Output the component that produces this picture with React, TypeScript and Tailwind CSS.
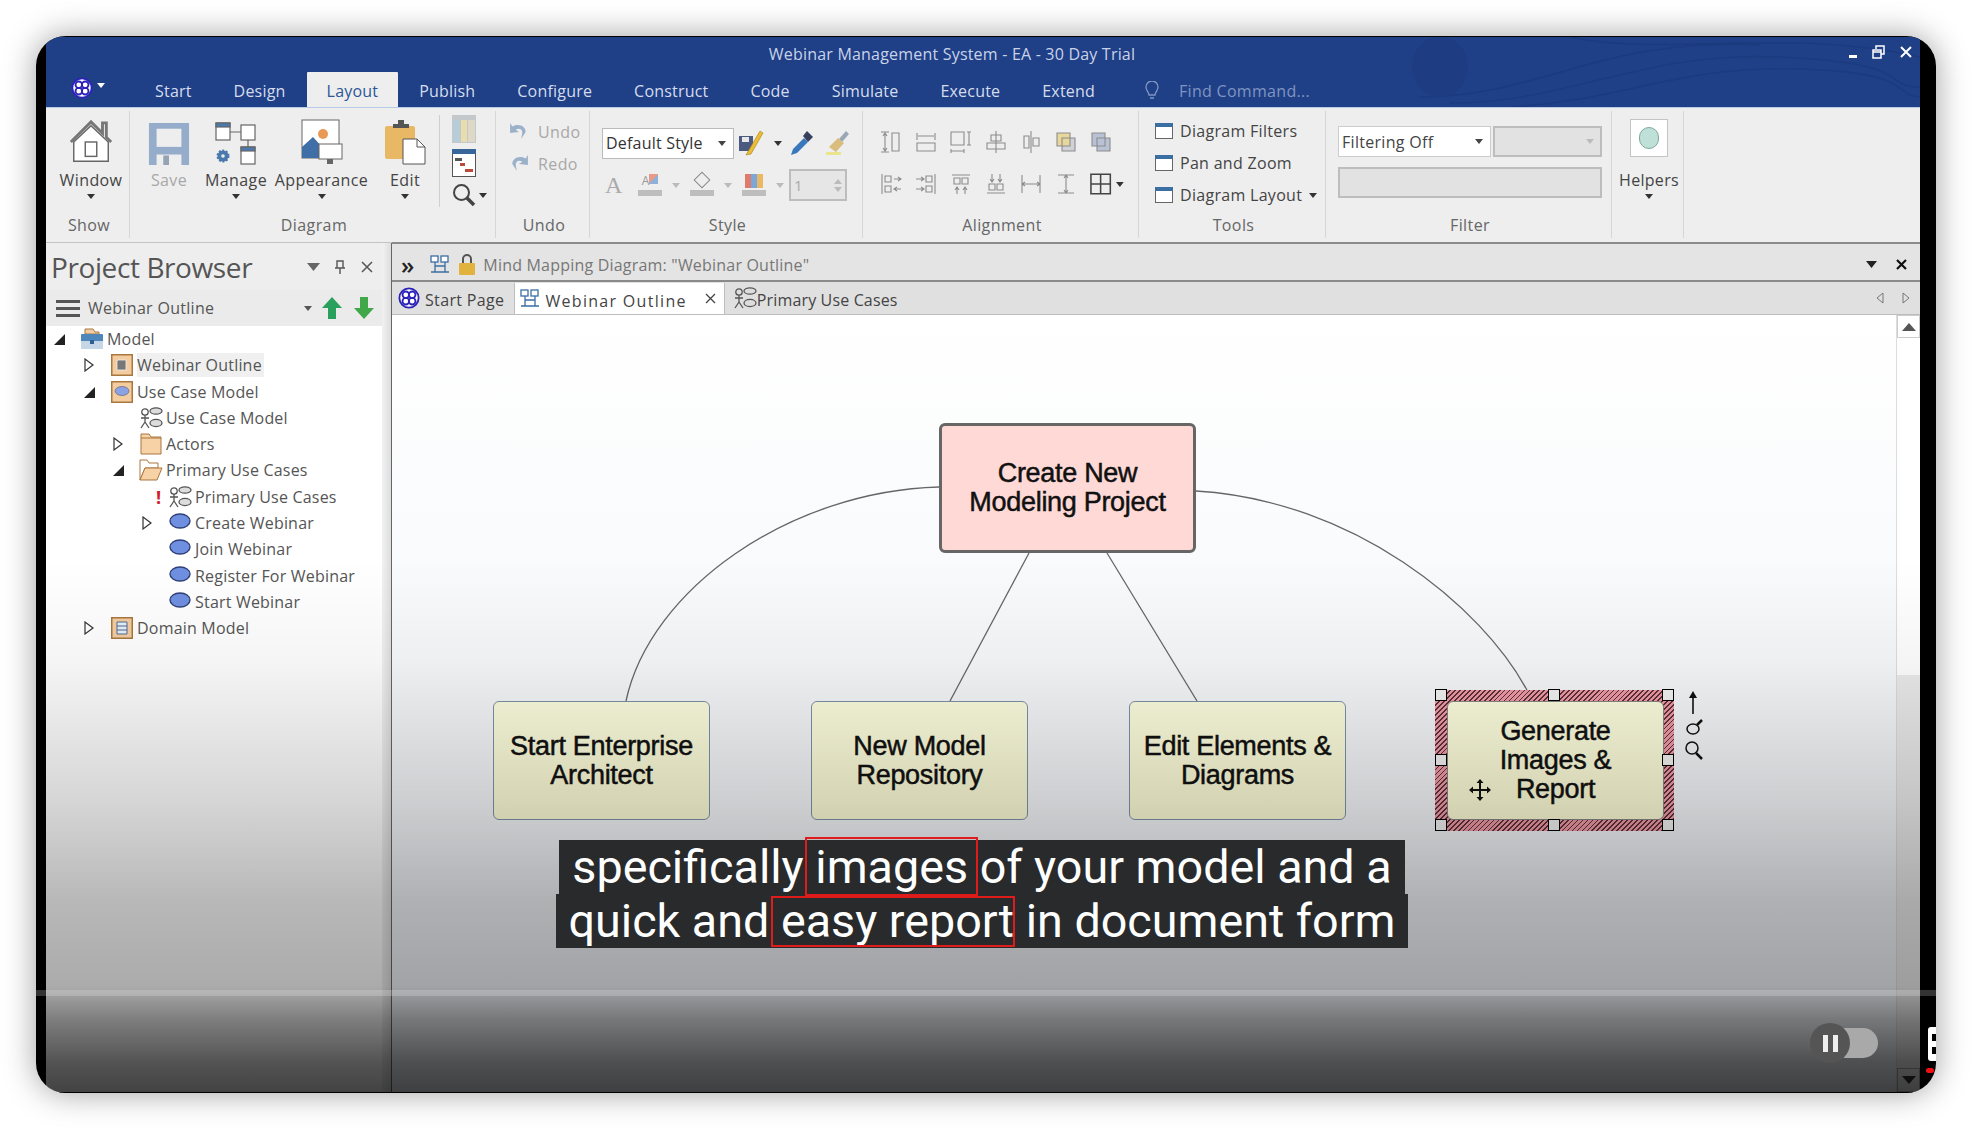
import React from "react";

const UI = "font-['Open_Sans','Noto_Sans',sans-serif]";

const Caret = ({ className = "", w = 8, h = 5 }: { className?: string; w?: number; h?: number }) => (
  <svg width={w} height={h} viewBox="0 0 8 5" preserveAspectRatio="none" className={className}>
    <path d="M0 0h8L4 5z" fill="currentColor" />
  </svg>
);

const Logo = ({ size = 24 }: { size?: number }) => (
  <svg width={size} height={size} viewBox="0 0 24 24" fill="none">
    <circle cx="12" cy="12" r="10.5" fill="#fff" stroke="#2c22b8" strokeWidth="2" />
    <circle cx="8.5" cy="8.5" r="3.6" stroke="#2c22b8" strokeWidth="2" />
    <circle cx="15.5" cy="8.5" r="3.6" stroke="#2c22b8" strokeWidth="2" />
    <circle cx="8.5" cy="15.5" r="3.6" stroke="#2c22b8" strokeWidth="2" />
    <circle cx="15.5" cy="15.5" r="3.6" stroke="#2c22b8" strokeWidth="2" />
  </svg>
);

const HomeIcon = () => (
  <svg width="46" height="46" viewBox="0 0 48 48" fill="none">
    <path d="M3 24 24 3l12 12V4h4v15l5 5" stroke="#777" strokeWidth="3" />
    <path d="M6 24v20h36V24L24 7z" fill="#fff" stroke="#666" strokeWidth="1.5" />
    <rect x="18" y="24" width="12" height="15" fill="#fff" stroke="#666" strokeWidth="1.5" />
  </svg>
);

const SaveIcon = () => (
  <svg width="42" height="42" viewBox="0 0 42 44">
    <path d="M0 0h42v44H0z" fill="#95adcb" />
    <rect x="8" y="6" width="26" height="19" fill="#eee" />
    <rect x="8" y="33" width="26" height="11" fill="#eee" />
    <rect x="15" y="34" width="6" height="10" fill="#95a3b5" />
  </svg>
);

const ManageIcon = () => (
  <svg width="42" height="44" viewBox="0 0 42 44" fill="none" stroke="#666" strokeWidth="1.2">
    <rect x="1" y="2" width="14" height="17" fill="#fff" />
    <rect x="1" y="2" width="14" height="4" fill="#4a79ad" />
    <rect x="26" y="4" width="14" height="15" fill="#fff" />
    <path d="M15 11h11M33 19v7" />
    <rect x="26" y="26" width="14" height="17" fill="#fff" />
    <rect x="26" y="26" width="14" height="4" fill="#4a79ad" />
    <circle cx="8" cy="35" r="5.5" fill="#4a79ad" stroke="#4a79ad" strokeDasharray="2 1.5" strokeWidth="2" />
    <circle cx="8" cy="35" r="1.8" fill="#eee" stroke="none" />
  </svg>
);

const AppearanceIcon = () => (
  <svg width="42" height="46" viewBox="0 0 42 46" fill="none">
    <rect x="1" y="1" width="37" height="38" fill="#fff" stroke="#666" />
    <circle cx="22" cy="15" r="5" fill="#e89a55" />
    <path d="M1 39V28l11-10 11 12v9z" fill="#3f6fa6" />
    <rect x="18" y="25" width="23" height="15" fill="#fff" stroke="#666" />
    <rect x="26" y="40" width="6" height="5" fill="#666" />
  </svg>
);

const EditIcon = () => (
  <svg width="42" height="46" viewBox="0 0 42 46" fill="none">
    <rect x="1" y="7" width="30" height="33" rx="2" fill="#e8b865" />
    <path d="M9 9V5h5V1h6v4h5v4z" fill="#555" />
    <path d="M19 20h14l8 8v17H19z" fill="#fff" stroke="#555" />
    <path d="M33 20v8h8" stroke="#555" />
  </svg>
);

const ColumnsIcon = () => (
  <svg width="24" height="28" viewBox="0 0 24 28">
    <rect width="24" height="28" fill="#c2c8cc" />
    <rect x="1" y="5" width="7" height="22" fill="#b7cdd8" />
    <rect x="9" y="5" width="6" height="22" fill="#e9dcae" />
    <rect x="16" y="5" width="7" height="22" fill="#ddd9c6" />
  </svg>
);

const GanttIcon = () => (
  <svg width="24" height="28" viewBox="0 0 24 28">
    <rect x=".5" y=".5" width="23" height="27" fill="#fff" stroke="#555" />
    <rect width="24" height="5" fill="#38659a" />
    <rect x="3" y="9" width="7" height="3" fill="#555" />
    <rect x="8" y="14" width="5" height="3" fill="#bb4a3c" />
    <rect x="13" y="20" width="8" height="3" fill="#bb4a3c" />
  </svg>
);

const SearchIcon = ({ size = 24 }: { size?: number }) => (
  <svg width={size} height={size} viewBox="0 0 24 24" fill="none" stroke="#444">
    <circle cx="9.5" cy="9.5" r="7.5" strokeWidth="2" />
    <path d="m15 15 7 7" strokeWidth="3.5" />
  </svg>
);

const Arrow = ({ flip }: { flip?: boolean }) => (
  <svg width="20" height="20" viewBox="0 0 18 18" className={flip ? "-scale-x-100" : ""}>
    <path d="M3 9C3 4 9 1 15 4l2-3v9l-8-1 3-2C9 5 6 6 6 10l1 5z" fill="#9bb0c9" />
  </svg>
);

const BrushSave = () => (
  <svg width="26" height="26" viewBox="0 0 26 26">
    <rect x="1" y="6" width="14" height="15" fill="#4a5a80" />
    <rect x="4" y="7" width="7" height="5" fill="#e8e8e8" />
    <path d="M8 25 22 1l3 2-12 21z" fill="#e9bd35" stroke="#a97f13" strokeWidth=".6" />
  </svg>
);

const Dropper = () => (
  <svg width="24" height="26" viewBox="0 0 24 26">
    <path d="m1 25 2-6L14 8l4 4L7 23z" fill="#3a78bd" />
    <path d="m13 6 4-5 6 6-5 5z" fill="#37405a" />
  </svg>
);

const Broom = () => (
  <svg width="24" height="26" viewBox="0 0 24 26">
    <path d="m13 9 7-8 3 3-7 8z" fill="#9aa7b5" />
    <path d="m3 17 9-9 6 5-8 9z" fill="#d9bd7c" />
    <rect x="0" y="22" width="15" height="3" fill="#e8e58c" />
  </svg>
);

// alignment group, drawn on a 24 box
const alignIcons: React.ReactNode[] = [
  <path key="a" d="M2 2h8M2 22h8M6 3v18M4 6l2-3 2 3M4 18l2 3 2-3M13 3h7v18h-7z" />,
  <path key="b" d="M3 3v7M21 3v7M4 6h16M3 13h18v8H3z" />,
  <path key="c" d="M2 2h13v13H2zM20 2v13M18 2h4M18 15h4M2 19v4M15 19v4M2 21h13" />,
  <path key="d" d="M12 1v22M7 5h10v6H7zM3 13h18v6H3z" />,
  <path key="e" d="M12 1v22M5 6h5v12H5zM14 8h6v8h-6zM12 4v16" />,
  <path key="f" d="M3 3h13v13H3zM8 8h13v13H8z" />,
  <path key="g" d="M3 3h13v13H3zM8 8h13v13H8z" />,
  <path key="h" d="M3 2v20M6 4h6v6H6zM6 14h6v6H6zM15 7h7M15 17h7M19 5l3 2-3 2M18 15l-3 2 3 2" />,
  <path key="i" d="M21 2v20M12 4h6v6h-6zM12 14h6v6h-6zM2 7h8M2 17h8M7 5l3 2-3 2M7 15l3 2-3 2" />,
  <path key="j" d="M3 3h18M5 6h6v6H5zM13 6h6v6h-6zM8 15v7M16 15v7M6 18l2-3 2 3M14 18l2-3 2 3" />,
  <path key="k" d="M3 21h18M5 12h6v6H5zM13 12h6v6h-6zM8 2v8M16 2v8M6 7l2 3 2-3M14 7l2 3 2-3" />,
  <path key="l" d="M3 3v18M21 3v18M3 12h18M6 10l-3 2 3 2M18 10l3 2-3 2" />,
  <path key="m" d="M4 3h16M4 21h16M12 3v18M10 6l2-3 2 3M10 18l2 3 2-3" />,
];

const AlignIcon = ({ n }: { n: number }) => (
  <svg width="24" height="24" viewBox="0 0 24 24" fill="none" stroke="#8c8c8c" strokeWidth="1.1">
    {n === 5 && <rect x="8" y="8" width="13" height="13" fill="#cfd3d8" stroke="none" />}
    {n === 5 && <rect x="3" y="3" width="13" height="13" fill="#e8d79c" stroke="none" />}
    {n === 6 && <rect x="3" y="3" width="13" height="13" fill="#b8c2d4" stroke="none" />}
    {n === 6 && <rect x="8" y="8" width="13" height="13" fill="#b8c2d4" stroke="none" />}
    {alignIcons[n]}
  </svg>
);

const WinIcon = () => (
  <svg width="18" height="16" viewBox="0 0 18 16" fill="none">
    <rect x=".5" y=".5" width="17" height="15" fill="#fff" stroke="#666" />
    <rect x="0" y="0" width="18" height="4" fill="#3d6ea3" />
  </svg>
);

const DiagramGlyph = ({ color = "#555" }: { color?: string }) => (
  <svg width="24" height="22" viewBox="0 0 24 22" fill="none" stroke={color} strokeWidth="1.3">
    <circle cx="6" cy="5" r="3.2" />
    <path d="M6 8v7M2 11h8M6 15l-4 6M6 15l4 6" />
    <ellipse cx="17" cy="4" rx="6" ry="3.2" fill="#ddd" />
    <ellipse cx="17" cy="16" rx="6" ry="3.6" fill="#ddd" />
  </svg>
);

const MindGlyph = () => (
  <svg width="20" height="20" viewBox="0 0 20 20" fill="#fff" stroke="#3d6ea3" strokeWidth="1.3">
    <rect x="1" y="1" width="7" height="6" />
    <rect x="11" y="1" width="7" height="6" />
    <path d="M5 7v4h10V7M1 17h18M5 11v6M15 11v6" fill="none" />
  </svg>
);

const Expander = ({ open }: { open?: boolean }) => (
  <svg width="13" height="14" viewBox="0 0 13 14">
    {open ? (
      <path d="M1 13 12 2v11z" fill="#222" />
    ) : (
      <path d="M2 1v12l8-6z" fill="#fff" stroke="#333" strokeWidth="1.2" />
    )}
  </svg>
);

type Kind = "model" | "box-note" | "box-case" | "box-list" | "diagram" | "folder" | "open" | "case";

const TreeIcon = ({ kind }: { kind: Kind }) => {
  if (kind === "model")
    return (
      <svg width="22" height="22" viewBox="0 0 22 22">
        <path d="M4 6V1h8l2 3h4v2z" fill="#f0cda3" stroke="#a9773f" />
        <rect y="6" width="22" height="15" rx="1" fill="#4c86bb" />
        <rect y="13" width="22" height="8" fill="#c5d6e6" />
        <rect x="9" y="12" width="4" height="4" fill="#2e5f93" />
      </svg>
    );
  if (kind === "folder")
    return (
      <svg width="22" height="22" viewBox="0 0 22 22">
        <path d="M1 21V1h8l2 3h10v17z" fill="#f6d2a6" stroke="#a9773f" />
        <path d="M1 5h20" stroke="#a9773f" />
      </svg>
    );
  if (kind === "open")
    return (
      <svg width="24" height="22" viewBox="0 0 24 22">
        <path d="M1 21V1h7l2 3h9v5H6z" fill="#fff" stroke="#a9773f" />
        <path d="M1 21 6 9h17l-5 12z" fill="#f6d2a6" stroke="#a9773f" />
      </svg>
    );
  if (kind === "case")
    return (
      <svg width="22" height="16" viewBox="0 0 22 16" className="mb-[4px]">
        <ellipse cx="11" cy="8" rx="10" ry="7" fill="#6f8fe0" stroke="#2f3f77" strokeWidth="1.4" />
      </svg>
    );
  if (kind === "diagram") return <DiagramGlyph />;
  return (
    <svg width="22" height="22" viewBox="0 0 22 22">
      <rect x=".75" y=".75" width="20.5" height="20.5" fill="#f3cda0" stroke="#a9773f" strokeWidth="1.5" />
      {kind === "box-note" && <path d="M7 6h8v10H6V7z" fill="#777" stroke="#eee" strokeWidth=".8" />}
      {kind === "box-case" && <ellipse cx="11" cy="10" rx="7" ry="4.5" fill="#8ba3e4" stroke="#667" strokeWidth=".7" />}
      {kind === "box-list" && <path d="M6 5h10v12H6zM6 9h10M6 13h10" fill="#e6eef6" stroke="#4c6a93" />}
    </svg>
  );
};

type TreeRow = { label: string; level: number; kind: Kind; expander?: "open" | "closed"; mark?: boolean; selected?: boolean };

const tree: TreeRow[] = [
  { label: "Model", level: 0, kind: "model", expander: "open" },
  { label: "Webinar Outline", level: 1, kind: "box-note", expander: "closed", selected: true },
  { label: "Use Case Model", level: 1, kind: "box-case", expander: "open" },
  { label: "Use Case Model", level: 2, kind: "diagram" },
  { label: "Actors", level: 2, kind: "folder", expander: "closed" },
  { label: "Primary Use Cases", level: 2, kind: "open", expander: "open" },
  { label: "Primary Use Cases", level: 3, kind: "diagram", mark: true },
  { label: "Create Webinar", level: 3, kind: "case", expander: "closed" },
  { label: "Join Webinar", level: 3, kind: "case" },
  { label: "Register For Webinar", level: 3, kind: "case" },
  { label: "Start Webinar", level: 3, kind: "case" },
  { label: "Domain Model", level: 1, kind: "box-list", expander: "closed" },
];

const indents = ["pl-[7px]", "pl-[37px]", "pl-[66px]", "pl-[95px]"];

const tabs = ["Start", "Design", "Layout", "Publish", "Configure", "Construct", "Code", "Simulate", "Execute", "Extend"];

const BigButton = ({ icon, label, width, muted }: { icon: React.ReactNode; label: string; width: string; muted?: boolean }) => (
  <div className={`flex flex-col items-center ${width}`}>
    <div className="flex h-[47px] items-end">{icon}</div>
    <div className={`mt-[4px] whitespace-nowrap text-[16px] leading-[22px] tracking-[0.4px] ${muted ? "text-[#a8a8a8]" : "text-[#444]"}`}>{label}</div>
    {!muted && <Caret className="mt-[3px] text-[#333]" />}
  </div>
);

const Group = ({ label, width, children, className = "" }: { label: string; width: string; children: React.ReactNode; className?: string }) => (
  <div className={`flex h-full shrink-0 flex-col border-r border-[#d6d6d6] ${width}`}>
    <div className={`h-[103px] ${className}`}>{children}</div>
    <div className="flex h-[22px] items-center justify-center pl-[3px] text-[16px] tracking-[0.4px] text-[#666]">{label}</div>
  </div>
);

const DiagramNode = ({ lines, className }: { lines: string[]; className: string }) => (
  <div
    className={`absolute flex flex-col items-center justify-center rounded-[6px] font-['Liberation_Sans',Arial,sans-serif] text-[27px] leading-[29px] tracking-[-0.3px] text-[#111] [-webkit-text-stroke:0.5px_#111] ${className}`}
  >
    {lines.map((l) => (
      <div key={l}>{l}</div>
    ))}
  </div>
);

const Handle = ({ className }: { className: string }) => (
  <div className={`absolute h-[12px] w-[12px] border border-black bg-[#f4f4f4] ${className}`} />
);

export default function App() {
  return (
    <div className={`h-[1130px] w-[1972px] overflow-hidden bg-white pl-[36px] pt-[36px] ${UI}`}>
      <div className="relative flex h-[1057px] w-[1900px] flex-col overflow-hidden rounded-[30px] bg-black pb-[1px] pl-[10px] pr-[16px] pt-[1px] shadow-[0_0_32px_rgba(0,0,0,0.38)]">
        {/* title bar + tabs */}
        <div className="relative h-[70px] shrink-0 overflow-hidden bg-[#1f3f87]">
          <svg className="absolute right-0 top-0" width="560" height="70" viewBox="0 0 560 70" fill="none" stroke="#1c3a7e" strokeWidth="1.5">
            <path d="M60 60C180 60 240 0 400 8" />
            <path d="M90 66C210 66 280 14 420 20s100 30 140 30" />
            <path d="M150 70C260 64 320 28 440 32s90 26 120 28" />
            <path d="M210 0c90 20 220-10 350 20" />
            <ellipse cx="80" cy="30" rx="28" ry="30" fill="#1d3c82" stroke="none" />
          </svg>
          <div className="relative flex h-[34px] items-center justify-center pr-[62px] text-[16px] tracking-[0.2px] text-[#c9d3e8]">
            Webinar Management System - EA - 30 Day Trial
          </div>
          <div className="absolute right-[8px] top-[8px] flex items-center gap-[15px] text-white">
            <div className="mt-[8px] h-[3px] w-[8px] bg-white" />
            <svg width="13" height="14" viewBox="0 0 13 14" fill="none" stroke="#fff" strokeWidth="1.5">
              <path d="M4 4V1h8v8H9M1 5h8v8H1zM1 7h8" />
            </svg>
            <svg width="12" height="12" viewBox="0 0 12 12" stroke="#fff" strokeWidth="2">
              <path d="m1 1 10 10M11 1 1 11" />
            </svg>
          </div>
          <div className="absolute bottom-0 left-0 flex h-[37px] items-end">
            <div className="mb-[8px] ml-[25px] flex w-[63px] items-center gap-[4px] text-white">
              <Logo size={22} />
              <Caret className="mb-[6px]" />
            </div>
            {tabs.map((t) => (
              <div
                key={t}
                className={
                  t === "Layout"
                    ? "flex h-[35px] items-center rounded-t-[1px] bg-[#eee] px-[20px] pt-[2px] text-[16px] tracking-[0.2px] text-[#2b5797]"
                    : "flex h-[35px] items-center px-[21px] pt-[2px] text-[16px] tracking-[0.2px] text-[#d5dded]"
                }
              >
                {t}
              </div>
            ))}
            <div className="ml-[29px] flex h-[35px] items-center gap-[20px] pt-[2px] text-[16px] tracking-[0.3px] text-[#8095c0]">
              <svg width="14" height="20" viewBox="0 0 14 20" fill="none" stroke="#8095c0" strokeWidth="1.3">
                <path d="M4 14c0-3-3-4-3-8a6 6 0 0 1 12 0c0 4-3 5-3 8zM5 17h4" />
              </svg>
              Find Command...
            </div>
          </div>
        </div>

        {/* ribbon */}
        <div className="flex h-[135px] shrink-0 border-t border-[#b8cbe6] bg-[#eeeeee] pb-[4px] pt-[3px]">
          <Group label="Show" width="w-[84px]" className="pl-[5px] pt-[7px]">
            <BigButton icon={<HomeIcon />} label="Window" width="w-[80px]" />
          </Group>
          <Group label="Diagram" width="w-[366px]" className="flex pl-[11px] pt-[7px]">
            <BigButton icon={<SaveIcon />} label="Save" width="w-[56px]" muted />
            <BigButton icon={<ManageIcon />} label="Manage" width="w-[78px]" />
            <BigButton icon={<AppearanceIcon />} label="Appearance" width="w-[93px]" />
            <BigButton icon={<EditIcon />} label="Edit" width="w-[74px]" />
            <div className="-ml-[3px] -mt-[3px] flex h-[92px] flex-col items-start justify-between border-l border-[#cfcfcf] pl-[12px]">
              <ColumnsIcon />
              <GanttIcon />
              <div className="flex items-center gap-[3px] text-[#333]">
                <SearchIcon />
                <Caret />
              </div>
            </div>
          </Group>
          <Group label="Undo" width="w-[94px]" className="flex flex-col gap-[13px] pl-[13px] pt-[11px] text-[16px] tracking-[0.4px] text-[#a8a8a8]">
            <div className="flex h-[19px] items-center gap-[9px]">
              <Arrow flip />
              Undo
            </div>
            <div className="flex h-[19px] items-center gap-[9px]">
              <Arrow />
              Redo
            </div>
          </Group>
          <Group label="Style" width="w-[273px]" className="pl-[12px] pt-[16px]">
            <div className="flex h-[32px] items-center">
              <div className="flex h-[31px] w-[132px] items-center justify-between border border-[#bbb] bg-white pl-[3px] pr-[7px] text-[16px] tracking-[0.2px] text-[#333]">
                Default Style
                <Caret className="text-[#444]" />
              </div>
              <div className="ml-[4px]">
                <BrushSave />
              </div>
              <Caret className="ml-[10px] text-[#333]" />
              <div className="ml-[8px]">
                <Dropper />
              </div>
              <div className="ml-[12px]">
                <Broom />
              </div>
            </div>
            <div className="mt-[10px] flex h-[32px] items-center">
              <div className="w-[26px] pl-[3px] font-['Liberation_Serif',serif] text-[24px] leading-none text-[#aaa]">A</div>
              <div className="ml-[10px] flex w-[24px] flex-col items-center text-[12px] leading-[14px] text-[#999]">
                <div className="flex items-start">
                  <span>A</span>
                  <div className="h-[10px] w-[9px] bg-[linear-gradient(135deg,#e89a85_50%,#8fb0d8_50%)]" />
                </div>
                <div className="mt-[2px] h-[6px] w-[24px] bg-[#bdbdbd]" />
              </div>
              <Caret className="ml-[10px] text-[#bbb]" />
              <div className="ml-[10px] flex w-[24px] flex-col items-center">
                <div className="h-[12px] w-[12px] rotate-45 border border-[#888]" />
                <div className="mt-[4px] h-[6px] w-[24px] bg-[#bdbdbd]" />
              </div>
              <Caret className="ml-[10px] text-[#bbb]" />
              <div className="ml-[10px] flex w-[24px] flex-col items-center">
                <div className="h-[14px] w-[18px] bg-[linear-gradient(90deg,#e07a6a_33%,#7aa6d8_33%,#7aa6d8_66%,#e8b865_66%)]" />
                <div className="mt-[2px] h-[6px] w-[24px] bg-[#bdbdbd]" />
              </div>
              <Caret className="ml-[10px] text-[#bbb]" />
              <div className="ml-[5px] flex h-[32px] w-[58px] items-center justify-between border-2 border-[#bdbdbd] bg-[#e6e6e6] px-[3px] text-[15px] text-[#aaa]">
                1
                <div className="flex flex-col gap-[3px]">
                  <Caret className="rotate-180 text-[#bbb]" />
                  <Caret className="text-[#bbb]" />
                </div>
              </div>
            </div>
          </Group>
          <Group label="Alignment" width="w-[276px]" className="pl-[16px] pt-[19px]">
            <div className="grid w-[245px] grid-cols-[repeat(7,35px)] gap-y-[18px]">
              {[0, 1, 2, 3, 4, 5, 6, 7, 8, 9, 10, 11, 12].map((n) => (
                <AlignIcon key={n} n={n} />
              ))}
              <div className="flex items-center gap-[4px] text-[#333]">
                <svg width="24" height="24" viewBox="0 0 24 24" fill="none" stroke="#444" strokeWidth="1.6">
                  <path d="M2 2h20v20H2zM12 2v20M2 12h20" />
                </svg>
                <Caret />
              </div>
            </div>
          </Group>
          <Group label="Tools" width="w-[187px]" className="flex flex-col gap-[14px] pl-[16px] pt-[11px] text-[16px] tracking-[0.3px] text-[#444]">
            <div className="flex h-[18px] items-center gap-[7px]">
              <WinIcon />
              Diagram Filters
            </div>
            <div className="flex h-[18px] items-center gap-[7px]">
              <WinIcon />
              Pan and Zoom
            </div>
            <div className="flex h-[18px] items-center gap-[7px]">
              <WinIcon />
              Diagram Layout
              <Caret className="text-[#333]" />
            </div>
          </Group>
          <Group label="Filter" width="w-[286px]" className="pl-[12px] pt-[15px]">
            <div className="flex h-[31px] gap-[2px]">
              <div className="flex w-[153px] items-center justify-between border border-[#ccc] bg-white pl-[3px] pr-[7px] text-[16px] tracking-[0.3px] text-[#444]">
                Filtering Off
                <Caret className="text-[#444]" />
              </div>
              <div className="flex w-[109px] items-center justify-end border-2 border-[#bdbdbd] bg-[#e2e2e2] pr-[6px]">
                <Caret className="text-[#bbb]" />
              </div>
            </div>
            <div className="mt-[10px] h-[31px] w-[264px] border-2 border-[#bdbdbd] bg-[#e2e2e2]" />
          </Group>
          <Group label="" width="w-[72px]" className="flex flex-col items-center pl-[3px] pt-[8px]">
            <div className="flex h-[38px] w-[38px] items-center justify-center border border-[#c4c4c4] bg-white">
              <div className="h-[22px] w-[20px] rounded-full border border-[#7fa8a0] bg-[#bfe0d6]" />
            </div>
            <div className="mt-[12px] text-[16px] leading-[22px] tracking-[0.3px] text-[#444]">Helpers</div>
            <Caret className="mt-[3px] text-[#333]" />
          </Group>
        </div>

        {/* panels */}
        <div className="flex min-h-0 flex-1">
          {/* project browser */}
          <div className="flex w-[346px] shrink-0 border-t border-[#c4c4c4]">
            <div className="flex w-[336px] flex-col bg-white">
              <div className="flex h-[47px] shrink-0 items-center bg-[#eeeeee] pl-[5px] pr-[9px] text-[#555]">
                <span className="flex-1 text-[28px] leading-none tracking-[-0.4px]">Project Browser</span>
                <Caret className="text-[#666]" w={13} h={8} />
                <svg className="ml-[14px]" width="12" height="14" viewBox="0 0 12 14" fill="none" stroke="#555" strokeWidth="1.4">
                  <path d="M3 1h6v7H3zM1 8h10M6 8v6" />
                </svg>
                <svg className="ml-[15px]" width="12" height="12" viewBox="0 0 12 12" stroke="#555" strokeWidth="1.5">
                  <path d="m1 1 10 10M11 1 1 11" />
                </svg>
              </div>
              <div className="flex h-[36px] shrink-0 items-center bg-[#ebebeb] pl-[10px] pr-[8px] text-[16px] tracking-[0.3px] text-[#555]">
                <div className="flex w-[24px] flex-col gap-[4px]">
                  <div className="h-[3px] bg-[#555]" />
                  <div className="h-[3px] bg-[#555]" />
                  <div className="h-[3px] bg-[#555]" />
                </div>
                <span className="ml-[8px] flex-1">Webinar Outline</span>
                <Caret className="text-[#555]" />
                <svg className="ml-[10px]" width="20" height="22" viewBox="0 0 20 22">
                  <path d="M10 0 20 11h-6v11H6V11H0z" fill="#2aa05d" />
                </svg>
                <svg className="ml-[12px]" width="20" height="22" viewBox="0 0 20 22">
                  <path d="M10 22 20 11h-6V0H6v11H0z" fill="#41a84a" />
                </svg>
              </div>
              <div className="min-h-0 flex-1">
                {tree.map((r, i) => (
                  <div key={i} className={`flex h-[26.27px] items-center ${indents[r.level]}`}>
                    <div className="relative flex w-[24px] shrink-0 items-center">
                      {r.expander && <Expander open={r.expander === "open"} />}
                      {r.mark && <span className="absolute left-[15px] text-[18px] font-bold leading-none text-[#d0202a]">!</span>}
                    </div>
                    <div className="flex w-[30px] shrink-0 justify-center">
                      <TreeIcon kind={r.kind} />
                    </div>
                    <span className={`whitespace-nowrap text-[16px] leading-[24px] tracking-[0.2px] text-[#555] ${r.selected ? "bg-[#f0f0f0] pr-[2px]" : ""}`}>{r.label}</span>
                  </div>
                ))}
              </div>
            </div>
            <div className="w-[10px] shrink-0 border-r border-[#666] bg-[linear-gradient(90deg,#f2f2f2,#ddd)]" />
          </div>

          {/* diagram side */}
          <div className="flex min-w-0 flex-1 flex-col">
            <div className="flex h-[40px] shrink-0 items-center border-y-2 border-[#8a8a8a] bg-[#e4e4e4] pl-[9px] pr-[13px] pt-[5px] text-[16px] text-[#777]">
              <span className="text-[24px] font-semibold leading-none text-[#222]">»</span>
              <div className="ml-[16px]">
                <MindGlyph />
              </div>
              <svg className="ml-[9px]" width="16" height="22" viewBox="0 0 16 22">
                <path d="M4 9V5a4 4 0 0 1 8 0v4" fill="none" stroke="#555" strokeWidth="2" />
                <rect y="9" width="16" height="12" rx="1" fill="#e2b23f" />
              </svg>
              <span className="ml-[8px] flex-1 tracking-[0.2px]">Mind Mapping Diagram: "Webinar Outline"</span>
              <Caret className="mr-[4px] text-[#222]" w={11} h={7} />
              <svg className="ml-[15px]" width="11" height="11" viewBox="0 0 11 11" stroke="#111" strokeWidth="2.2">
                <path d="m1 1 9 9M10 1l-9 9" />
              </svg>
            </div>
            <div className="flex h-[33px] shrink-0 items-end border-b border-[#bdbdbd] bg-[#e0e0e0] pl-[5px] pr-[10px] text-[16px] text-[#444]">
              <div className="flex h-[32px] items-center gap-[5px] pl-[1px] pr-[10px] tracking-[0.35px]">
                <Logo size={22} />
                <span className="pt-[4px]">Start Page</span>
              </div>
              <div className="flex h-[31px] items-center border-l border-r border-[#bdbdbd] bg-white pl-[5px] pr-[8px]">
                <MindGlyph />
                <span className="ml-[5px] pt-[4px] tracking-[1.3px]">Webinar Outline</span>
                <svg className="ml-[18px]" width="11" height="11" viewBox="0 0 11 11" stroke="#444" strokeWidth="1.3">
                  <path d="m1 1 9 9M10 1l-9 9" />
                </svg>
              </div>
              <div className="flex h-[32px] flex-1 items-center pl-[8px]">
                <DiagramGlyph />
                <span className="flex-1 pt-[4px] tracking-[0.15px]">Primary Use Cases</span>
                <svg width="8" height="12" viewBox="0 0 8 12" fill="none" stroke="#777">
                  <path d="M7 1v10L1 6z" />
                </svg>
                <svg className="ml-[18px]" width="8" height="12" viewBox="0 0 8 12" fill="none" stroke="#777">
                  <path d="M1 1v10l6-5z" />
                </svg>
              </div>
            </div>
            <div className="flex min-h-0 flex-1">
              <div className="relative min-w-0 flex-1 bg-[linear-gradient(180deg,#fff,#eef1f6)]">
                <svg className="absolute left-0 top-0" width="1504" height="560" fill="none" stroke="#666" strokeWidth="1.3">
                  <path d="M547 172C398 176 258 274 234 386" />
                  <path d="M637 238 558 386" />
                  <path d="M715 238 805 386" />
                  <path d="M804 176C960 185 1090 290 1136 377" />
                </svg>
                <DiagramNode
                  lines={["Create New", "Modeling Project"]}
                  className="left-[547px] top-[108px] h-[130px] w-[257px] border-[3px] border-[#666] bg-[#ffd9d6]"
                />
                <DiagramNode
                  lines={["Start Enterprise", "Architect"]}
                  className="left-[101px] top-[386px] h-[119px] w-[217px] border border-[#7d93a8] bg-[linear-gradient(180deg,#ffffe0,#ffffd8)]"
                />
                <DiagramNode
                  lines={["New Model", "Repository"]}
                  className="left-[419px] top-[386px] h-[119px] w-[217px] border border-[#7d93a8] bg-[linear-gradient(180deg,#ffffe0,#ffffd8)]"
                />
                <DiagramNode
                  lines={["Edit Elements &", "Diagrams"]}
                  className="left-[737px] top-[386px] h-[119px] w-[217px] border border-[#7d93a8] bg-[linear-gradient(180deg,#ffffe0,#ffffd8)]"
                />
                <div className="absolute left-[1043px] top-[375px] h-[141px] w-[239px] bg-[repeating-linear-gradient(135deg,#5c3038_0,#5c3038_1.2px,#f09aa6_1.2px,#f09aa6_3.5px)]" />
                <DiagramNode
                  lines={["Generate", "Images &", "Report"]}
                  className="left-[1055px] top-[386px] h-[119px] w-[217px] border border-[#888] bg-[linear-gradient(180deg,#ffffe0,#ffffd8)]"
                />
                <Handle className="left-[1043px] top-[374px]" />
                <Handle className="left-[1156px] top-[374px]" />
                <Handle className="left-[1270px] top-[374px]" />
                <Handle className="left-[1043px] top-[439px]" />
                <Handle className="left-[1270px] top-[439px]" />
                <Handle className="left-[1043px] top-[504px]" />
                <Handle className="left-[1156px] top-[504px]" />
                <Handle className="left-[1270px] top-[504px]" />
                <svg className="absolute left-[1076px] top-[463px]" width="24" height="24" viewBox="0 0 24 24" fill="none" stroke="#111" strokeWidth="2">
                  <path d="M12 2v20M2 12h20" />
                  <path d="m12 1 3.5 4h-7zM12 23l3.5-4h-7zM1 12l4-3.5v7zM23 12l-4-3.5v7z" fill="#111" stroke="none" />
                </svg>
                <svg className="absolute left-[1292px] top-[376px]" width="20" height="72" viewBox="0 0 20 72" fill="none" stroke="#111" strokeWidth="1.5">
                  <path d="M9 3v20" strokeWidth="1.6" />
                  <path d="m9 0 4 7H5z" fill="#111" stroke="none" />
                  <ellipse cx="9" cy="38" rx="6" ry="5" />
                  <path d="m13 34 5-5" strokeWidth="2.5" />
                  <circle cx="8" cy="57" r="6" />
                  <path d="m12 62 6 6" strokeWidth="2.5" />
                </svg>
              </div>
              <div className="flex w-[24px] shrink-0 flex-col border-l border-[#ddd] bg-[#ebebeb]">
                <div className="flex h-[23px] items-center justify-center border border-[#ccc] bg-white">
                  <Caret className="rotate-180 text-[#555]" w={14} h={8} />
                </div>
                <div className="h-[337px] bg-white" />
                <div className="flex-1" />
                <div className="flex h-[24px] items-center justify-center border border-[#aaa]">
                  <Caret className="text-[#333]" w={14} h={8} />
                </div>
              </div>
            </div>
          </div>
        </div>

        {/* video player overlays */}
        <div className="pointer-events-none absolute bottom-0 left-[10px] right-[16px] top-[524px] bg-[linear-gradient(180deg,rgba(0,0,0,0)_0%,rgba(0,0,0,0.04)_19%,rgba(0,0,0,0.16)_45%,rgba(0,0,0,0.28)_64%,rgba(0,0,0,0.33)_80%,rgba(0,0,0,0.5)_86%,rgba(0,0,0,0.67)_94%,rgba(0,0,0,0.74)_100%)]" />
        <div className="absolute left-0 right-0 top-[954px] h-[6px] bg-white/20" />
        <div className="absolute left-[496px] top-[804px] flex w-[900px] flex-col items-center font-['Roboto',sans-serif] text-[46.7px] leading-[54px] text-white">
          <div className="flex h-[54px] items-center whitespace-pre bg-[#292a2c] px-[13px]">
            specifically <span className="relative">images<span className="absolute -inset-x-[10px] top-[-3px] bottom-[-2px] border-2 border-[#e01b1b]" /></span> of your model and a
          </div>
          <div className="flex h-[54px] items-center whitespace-pre bg-[#292a2c] px-[13px]">
            quick and <span className="relative">easy report<span className="absolute -left-[10px] -right-[1px] top-[2px] bottom-[1px] border-2 border-[#e01b1b]" /></span> in document form
          </div>
        </div>
        <div className="absolute left-[1774px] top-[992px] flex h-[30px] w-[68px] items-center">
          <div className="ml-[10px] h-[30px] w-[58px] rounded-full bg-[#a9a9a9]" />
          <div className="absolute left-0 top-[-5px] flex h-[40px] w-[40px] items-center justify-center gap-[5px] rounded-full bg-[#555]">
            <div className="h-[17px] w-[5px] bg-[#eee]" />
            <div className="h-[17px] w-[5px] bg-[#eee]" />
          </div>
        </div>
        <div className="absolute left-[1892px] top-[991px] flex h-[34px] w-[8px] flex-col justify-center gap-[6px] rounded-l-[3px] bg-white pl-[4px]">
          <div className="h-[7px] w-[4px] bg-black" />
          <div className="h-[7px] w-[4px] bg-black" />
        </div>
        <div className="absolute left-[1890px] top-[1032px] h-[5px] w-[8px] rounded-full bg-[#f01010]" />
      </div>
    </div>
  );
}
